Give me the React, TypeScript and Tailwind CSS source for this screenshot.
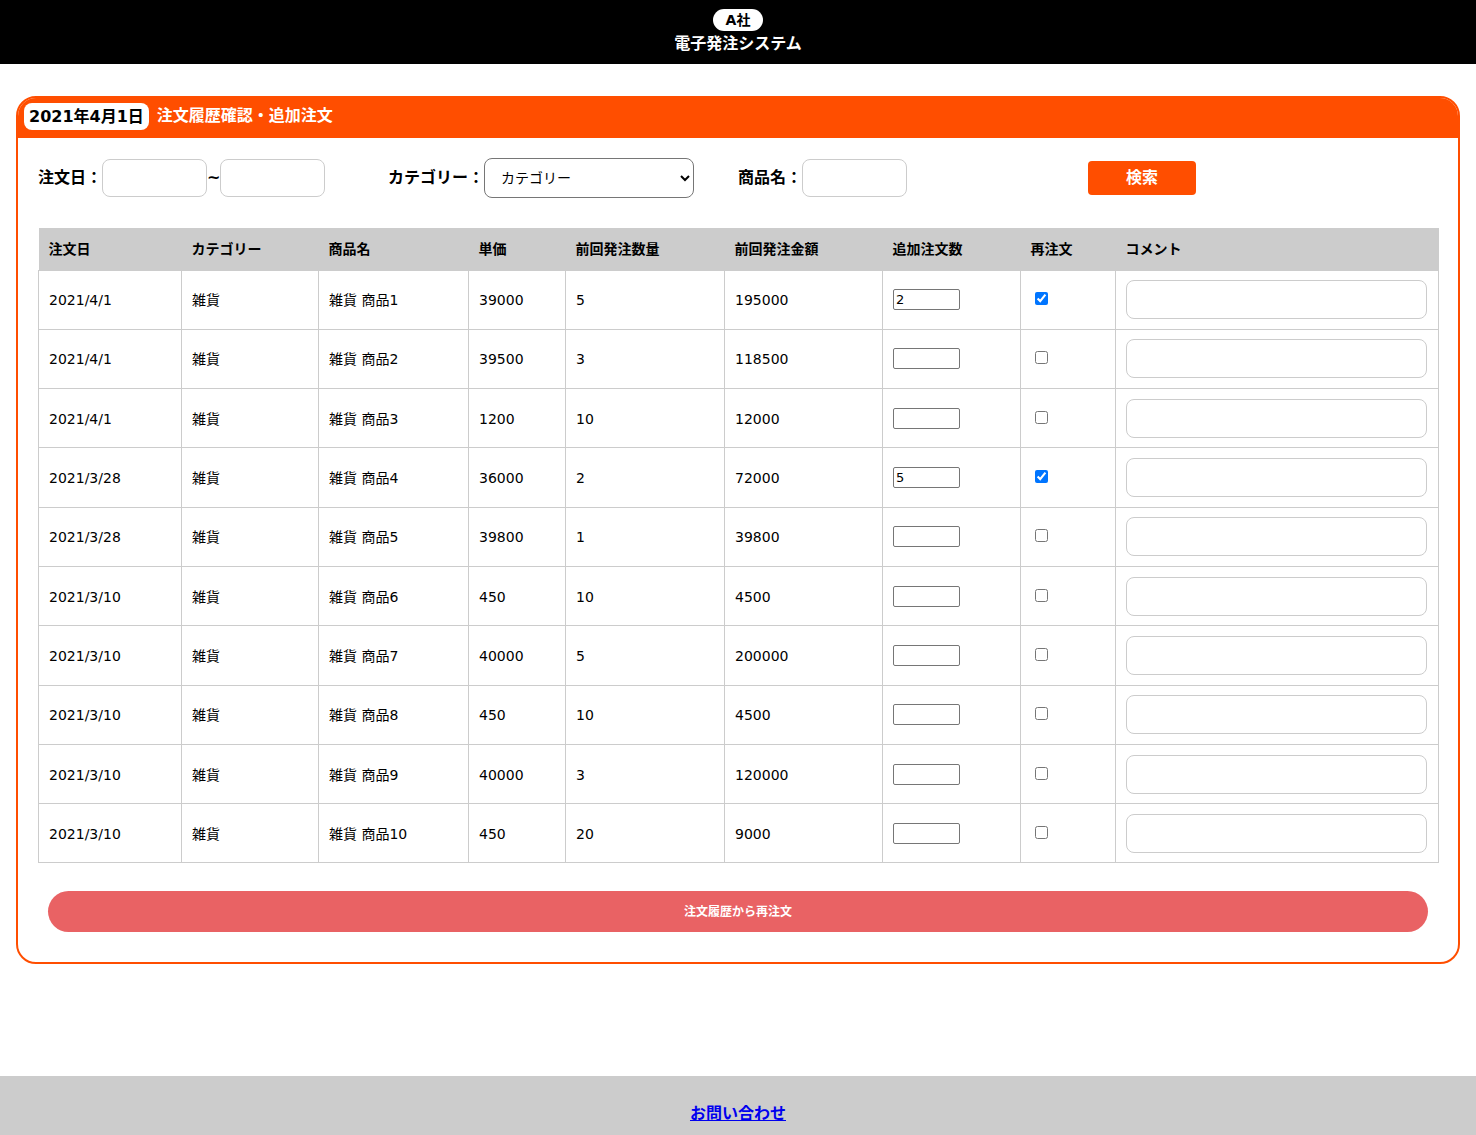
import React from "react";

const rows = [
  ["2021/4/1", "雑貨", "雑貨 商品1", "39000", "5", "195000", "2", true],
  ["2021/4/1", "雑貨", "雑貨 商品2", "39500", "3", "118500", "", false],
  ["2021/4/1", "雑貨", "雑貨 商品3", "1200", "10", "12000", "", false],
  ["2021/3/28", "雑貨", "雑貨 商品4", "36000", "2", "72000", "5", true],
  ["2021/3/28", "雑貨", "雑貨 商品5", "39800", "1", "39800", "", false],
  ["2021/3/10", "雑貨", "雑貨 商品6", "450", "10", "4500", "", false],
  ["2021/3/10", "雑貨", "雑貨 商品7", "40000", "5", "200000", "", false],
  ["2021/3/10", "雑貨", "雑貨 商品8", "450", "10", "4500", "", false],
  ["2021/3/10", "雑貨", "雑貨 商品9", "40000", "3", "120000", "", false],
  ["2021/3/10", "雑貨", "雑貨 商品10", "450", "20", "9000", "", false],
] as const;

const headers = ["注文日", "カテゴリー", "商品名", "単価", "前回発注数量", "前回発注金額", "追加注文数", "再注文", "コメント"];
const widths = ["w-[143px]", "w-[137px]", "w-[150px]", "w-[97px]", "w-[159px]", "w-[158px]", "w-[138px]", "w-[95px]", "w-[323px]"];

export default function App() {
  return (
    <div className="min-h-[1135px] bg-white text-black" style={{ fontFamily: '"DejaVu Sans", "Noto Sans CJK JP", sans-serif' }}>
      <header className="h-16 bg-black flex flex-col items-center pt-[9px]">
        <div className="h-[22px] px-[13px] rounded-full bg-white text-black text-[14px] font-bold leading-[22px]">A社</div>
        <div className="text-white font-bold text-[16px] leading-[22px] mt-[2px]">電子発注システム</div>
      </header>

      <main className="pt-8 pb-[112px] px-4">
        <div className="border-2 border-[#ff4e00] rounded-[20px] overflow-hidden">
          <div className="h-[40px] bg-[#ff4e00] flex items-center px-[6px] pb-[4px]">
            <span className="bg-white rounded-[8px] h-[27px] px-[5px] text-[16px] font-bold leading-[27px]">2021年4月1日</span>
            <span className="ml-[8px] text-white text-[16px] font-bold">注文履歴確認・追加注文</span>
          </div>

          <div className="px-5 pt-5 pb-[30px]">
            <div className="flex items-center h-[40px] text-[16px] font-bold">
              <span className="w-16">注文日：</span>
              <input className="w-[105px] h-[38px] border border-[#ccc] rounded-[8px]" />
              <span className="w-[13px] text-center">~</span>
              <input className="w-[105px] h-[38px] border border-[#ccc] rounded-[8px]" />
              <span className="ml-[63px] w-24">カテゴリー：</span>
              <select className="w-[210px] h-[40px] border border-[#767676] rounded-[8px] pl-[12px] pr-[8px] text-[14px] font-normal bg-white">
                <option>カテゴリー</option>
              </select>
              <span className="ml-[44px] w-16">商品名：</span>
              <input className="w-[105px] h-[38px] border border-[#ccc] rounded-[8px]" />
              <button className="ml-[181px] w-[108px] h-[34px] bg-[#ff4e00] text-white rounded-[4px] text-[16px] font-bold pb-[1px]">検索</button>
            </div>

            <table className="mt-[30px] w-[1400px] border-collapse table-fixed text-[14px]">
              <thead>
                <tr className="bg-[#ccc] h-[42px]">
                  {headers.map((h, i) => (
                    <th key={h} className={`${widths[i]} text-left font-bold pl-[10px] pt-[2px]`}>{h}</th>
                  ))}
                </tr>
              </thead>
              <tbody>
                {rows.map((r, idx) => (
                  <tr key={idx} className="h-[59.3px]">
                    {[0, 1, 2, 3, 4, 5].map((c) => (
                      <td key={c} className="border border-[#ccc] pl-[10px] pt-[2px]">{r[c] as string}</td>
                    ))}
                    <td className="border border-[#ccc] pl-[10px]">
                      <input defaultValue={r[6] as string} className="block w-[67px] h-[21px] border border-[#767676] rounded-[2px] px-[2px] text-[13px]" />
                    </td>
                    <td className="border border-[#ccc] pl-[14px]">
                      <input type="checkbox" defaultChecked={r[7] as boolean} className="block w-[13px] h-[13px] -mt-[2px]" />
                    </td>
                    <td className="border border-[#ccc] pl-[10px] pr-[10px]">
                      <input className="block w-[301px] h-[39px] border border-[#ccc] rounded-[8px]" />
                    </td>
                  </tr>
                ))}
              </tbody>
            </table>

            <div className="px-[10px] mt-[28px]">
              <button className="w-full h-[41px] rounded-full bg-[#e96264] text-white text-[12px] font-bold">注文履歴から再注文</button>
            </div>
          </div>
        </div>
      </main>

      <footer className="h-[59px] bg-[#ccc] flex items-center justify-center pt-[16px]">
        <a href="#" className="text-[#0000ee] underline font-bold text-[16px]">お問い合わせ</a>
      </footer>
    </div>
  );
}
